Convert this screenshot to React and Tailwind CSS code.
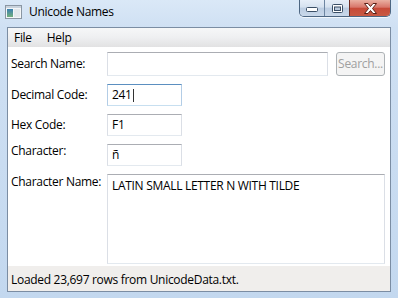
export default function App() {
  const font = "font-['Open_Sans','Noto_Sans',sans-serif]";
  const box = "border border-t-[#abadb3] border-x-[#dbdfe6] border-b-[#e3e9ef] bg-white";
  return (
    <div className={`w-[398px] h-[298px] relative overflow-hidden flex flex-col bg-[linear-gradient(to_bottom,#dae8f7_0px,#cfe0f3_28px,#c3d8ef_100%)] ${font} text-[12px] tracking-[-0.3px] text-black`}>
      {/* title bar */}
      <div className="h-[27px] flex items-start shrink-0">
        <svg width="17" height="14" viewBox="0 0 17 14" className="ml-[5px] mt-[5px]">
          <defs>
            <linearGradient id="ig" x1="0" y1="0" x2="0" y2="1">
              <stop offset="0" stopColor="#3a7fb0" />
              <stop offset="1" stopColor="#74b07c" />
            </linearGradient>
          </defs>
          <rect x="0.5" y="0.5" width="16" height="13" fill="#f4f6f8" stroke="#8a96a3" />
          <rect x="1" y="1" width="15" height="2" fill="#c9d3dd" />
          <rect x="2" y="4" width="6" height="8" fill="url(#ig)" />
          <rect x="9" y="4" width="6" height="8" fill="#e3e8ec" />
        </svg>
        <div className="ml-[7px] mt-[4px] leading-[16px] text-[12px]">Unicode Names</div>
        <div className="flex-1" />
        {/* caption buttons */}
        <div className="mr-[7px] flex h-[17px] rounded-b-[5px] border border-t-0 border-[#4d6682] overflow-hidden shadow-[0_1px_0_rgba(255,255,255,0.7)]">
          <div className="w-[25px] h-full flex items-center justify-center bg-[linear-gradient(to_bottom,#e6eef8_0%,#d5e1ef_45%,#bccde2_50%,#c9d8ea_100%)] border-r border-[#6d85a1]">
            <svg width="12" height="6" viewBox="0 0 12 6" className="mt-[4px]">
              <rect x="0.5" y="0.5" width="11" height="4" rx="1" fill="#fff" stroke="#3b4f66" />
            </svg>
          </div>
          <div className="w-[25px] h-full flex items-center justify-center bg-[linear-gradient(to_bottom,#e6eef8_0%,#d5e1ef_45%,#bccde2_50%,#c9d8ea_100%)] border-r border-[#6d2a20]">
            <svg width="11" height="9" viewBox="0 0 11 9" className="mt-[1px]">
              <rect x="0.5" y="0.5" width="10" height="8" rx="1" fill="#fff" stroke="#3b4f66" />
              <rect x="2.5" y="3" width="6" height="3.5" fill="#b9c9dc" stroke="#3b4f66" strokeWidth="1" />
            </svg>
          </div>
          <div className="w-[40px] h-full flex items-center justify-center bg-[linear-gradient(to_bottom,#eab0a2_0%,#d8766a_45%,#c74a38_52%,#c85a44_100%)]">
            <svg width="15" height="11" viewBox="0 0 15 11" className="mt-[1px]">
              <path d="M1.5 0.5 H5 L7.5 3.5 L10 0.5 H13.5 L9.5 5.5 L13.5 10.5 H10 L7.5 7.5 L5 10.5 H1.5 L5.5 5.5 Z" fill="#fff" stroke="#5a2118" strokeWidth="1" strokeLinejoin="round" />
            </svg>
          </div>
        </div>
      </div>

      {/* client area */}
      <div className="mx-[7px] mb-[6px] flex-1 border border-[#7b8da3] bg-white flex flex-col min-h-0">
        {/* menu */}
        <div className="h-[19px] shrink-0 flex items-center bg-[linear-gradient(to_bottom,#f6f7f8_0%,#eeeff1_50%,#e2e2e3_100%)]">
          <span className="ml-[6px] leading-[16px]">File</span>
          <span className="ml-[15px] leading-[16px]">Help</span>
        </div>

        {/* form */}
        <div className="flex flex-col pt-[5px] pr-[4px]">
          <div className="flex items-start h-[24px]">
            <div className="w-[99px] pl-[3px] pt-[4px] leading-[16px]">Search Name:</div>
            <div className={`w-[221px] h-[24px] ${box}`} />
            <div className="ml-[8px] w-[49px] h-[24px] rounded-[3px] border border-[#adb2b5] bg-[#f4f4f4] flex items-center justify-center text-[#a0a0a0] leading-[16px]">
              Search...
            </div>
          </div>

          <div className="flex items-start h-[22px] mt-[8px]">
            <div className="w-[99px] pl-[3px] pt-[3px] leading-[16px]">Decimal Code:</div>
            <div className="w-[75px] h-[22px] border border-t-[#5b8fc0] border-x-[#b3cde6] border-b-[#c7dff0] bg-white flex items-center pl-[4px] leading-[16px]">
              <span>241</span>
              <span className="inline-block w-[1px] h-[13px] bg-[#333] ml-[1px]" />
            </div>
          </div>

          <div className="flex items-start h-[22px] mt-[8px]">
            <div className="w-[99px] pl-[3px] pt-[3px] leading-[16px]">Hex Code:</div>
            <div className={`w-[75px] h-[22px] ${box} flex items-center pl-[4px] leading-[16px]`}>F1</div>
          </div>

          <div className="flex items-start h-[22px] mt-[8px]">
            <div className="w-[99px] pl-[3px] -mt-[1px] leading-[16px]">Character:</div>
            <div className={`w-[75px] h-[22px] ${box} flex items-center pl-[4px] leading-[16px]`}>ñ</div>
          </div>

          <div className="flex items-start mt-[8px]">
            <div className="w-[99px] pl-[3px] leading-[16px]">Character Name:</div>
            <div className={`w-[278px] h-[90px] ${box} pl-[4px] pt-[3px] leading-[16px]`}>
              LATIN SMALL LETTER N WITH TILDE
            </div>
          </div>
        </div>

        <div className="flex-1" />

        {/* status bar */}
        <div className="h-[25px] shrink-0 bg-[#f0eeec] pl-[3px] pt-[6px] leading-[16px]">
          Loaded 23,697 rows from UnicodeData.txt.
        </div>
      </div>
    </div>
  );
}
